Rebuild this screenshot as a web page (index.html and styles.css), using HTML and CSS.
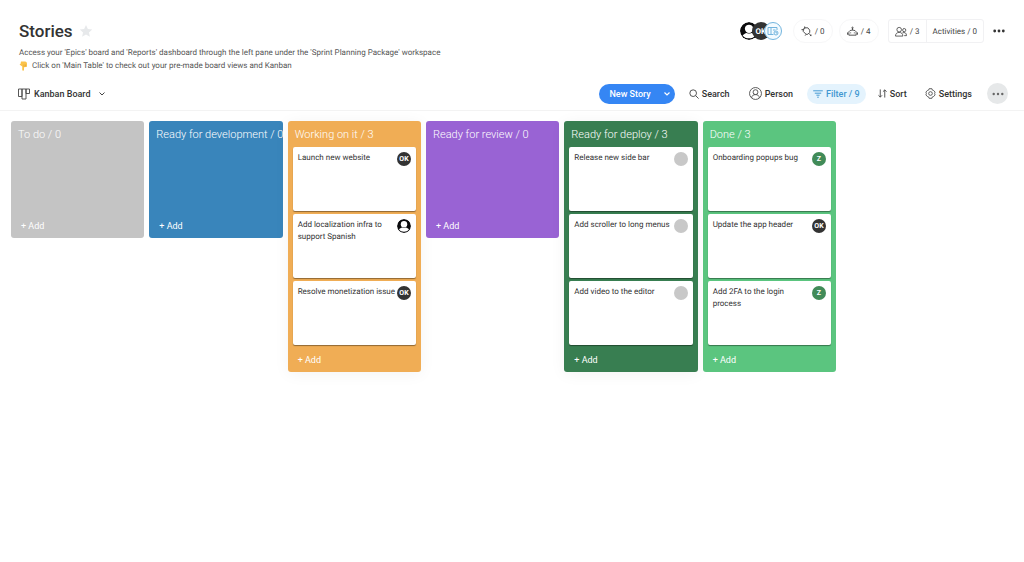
FILE: index.html
```html
<!DOCTYPE html>
<html lang="en">
<head>
<meta charset="utf-8">
<meta name="viewport" content="width=device-width, initial-scale=1">
<title>Stories</title>
<link rel="stylesheet" href="styles.css">
</head>
<body>
<svg class="defs" aria-hidden="true">
  <symbol id="user" viewBox="0 0 24 24">
    <circle cx="12" cy="12" r="12" fill="#0b0b0d"/>
    <circle cx="12" cy="9" r="5.500" fill="#fff"/>
    <path d="M3.500 18c1-2 3.500-3 5.500-3.500 2 1 4 1 6 0 2 .5 4.500 1.500 5.500 3.500-2 2.800-5 3.800-8.500 3.800S5.500 20.800 3.500 18z" fill="#fff"/>
  </symbol>
</svg>
<header class="header">
  <div class="intro">
    <div class="title-row">
      <h1 class="title">Stories</h1>
      <button class="star" aria-label="Add to favorites"><svg viewBox="0 0 24 24" width="14" height="14"><path d="M12 1.500l3.200 7 7.600.8-5.700 5.100 1.600 7.600-6.700-3.900L5.300 22l1.600-7.600L1.200 9.300l7.600-.8z" fill="#e7e9eb"/></svg></button>
    </div>
    <p class="desc">Access your 'Epics' board and 'Reports' dashboard through the left pane under the 'Sprint Planning Package' workspace</p>
    <p class="desc desc-tip"><svg class="hand" viewBox="0 0 18 20" width="9" height="10" aria-hidden="true"><path d="M4 1h8c3 0 4 2 4 5v4c0 2-2 2.500-3 1.500-1 1.500-2.500 1.200-3 .5V18c0 2.200-3.500 2.200-3.500 0v-7L3 8.500C1 7 1 5.500 3 6z" fill="#fbc34a"/><path d="M10 7v5M13 7v4" stroke="#d9962c" fill="none"/></svg>Click on 'Main Table' to check out your pre-made board views and Kanban</p>
  </div>
  <div class="header-actions">
    <div class="members">
      <svg class="member" width="18" height="18" aria-label="Member"><use href="#user"/></svg>
      <span class="member member-ok">OK</span>
      <span class="member member-view"><svg viewBox="0 0 24 24" width="12" height="12" fill="none" stroke="#73b5de" stroke-width="2"><path d="M13 19H2V5h18v5M8 5v14"/><path d="M12 10h5"/><circle cx="18" cy="16" r="4"/><path d="M18 14v2h2"/></svg></span>
    </div>
    <button class="chip"><svg viewBox="0 0 24 24" width="11" height="11" fill="none" stroke="#444" stroke-width="2"><path d="M5 7l3-3h7l4 5v5l-4 4h-4l-6-6zM1 8h6M8 1v5M11 18l-2 3M17 16l6 6M20 22l2-3"/></svg>/ 0</button>
    <button class="chip"><svg viewBox="0 0 24 24" width="11" height="11" fill="none" stroke="#444" stroke-width="2"><path d="M4 20v-6c0-3 3-5 8-5s8 2 8 5v6zM12 9V5M1 14v5M23 14v5M8 14v2M16 14v2"/><circle cx="12" cy="4" r="1.500"/></svg>/ 4</button>
    <div class="group">
      <button class="group-btn"><svg viewBox="0 0 26 24" width="12" height="11" fill="none" stroke="#444" stroke-width="1.800"><circle cx="9" cy="8" r="5"/><circle cx="20" cy="9" r="3.500"/><path d="M1 22c0-5 3-8 8-8s8 3 8 8zM16 15c5-2 9 0 9 6h-5"/></svg>/ 3</button>
      <button class="group-btn">Activities / 0</button>
    </div>
    <button class="more" aria-label="More options"><svg viewBox="0 0 12 4" width="12" height="4" fill="#333"><circle cx="1.700" cy="2" r="1.400"/><circle cx="6" cy="2" r="1.400"/><circle cx="10.300" cy="2" r="1.400"/></svg></button>
  </div>
</header>

<nav class="toolbar">
  <button class="tool view"><svg viewBox="0 0 24 24" width="12" height="12" fill="none" stroke="#444" stroke-width="1.800"><path d="M1 2h7v15H1zM8 2h8v20H8zM16 2h7v9h-7z"/></svg>Kanban Board<svg class="view-caret" viewBox="0 0 12 8" width="6" height="4" fill="none" stroke="#444" stroke-width="2"><path d="M1 1l5 5 5-5"/></svg></button>
  <div class="tools">
    <div class="split">
      <button class="new">New Story</button>
      <button class="new-caret" aria-label="More ways to add"><svg viewBox="0 0 12 8" width="6" height="4" fill="none" stroke="#fff" stroke-width="2.400"><path d="M1 1l5 5 5-5"/></svg></button>
    </div>
    <button class="tool search"><svg viewBox="0 0 24 24" width="10" height="10" fill="none" stroke="#444" stroke-width="2.200"><circle cx="10" cy="10" r="8"/><path d="M16 16l7 7"/></svg>Search</button>
    <button class="tool person"><svg viewBox="0 0 24 24" width="13" height="13" fill="none" stroke="#444" stroke-width="1.600"><circle cx="12" cy="12" r="11"/><circle cx="12" cy="9.500" r="4.500"/><path d="M5 20c0-4 3-6 7-6s7 2 7 6"/></svg>Person</button>
    <button class="tool filter"><svg viewBox="0 0 24 20" width="10" height="8" fill="none" stroke="#3f97d1" stroke-width="2.400"><path d="M0 2h24M4 8h16M8 13h8M10 18h4"/></svg>Filter / 9</button>
    <button class="tool sort"><svg viewBox="0 0 20 20" width="9" height="9" fill="none" stroke="#444" stroke-width="2"><path d="M5 1v17M1 14l4 4 4-4M15 19V2M11 6l4-4 4 4"/></svg>Sort</button>
    <button class="tool settings"><svg viewBox="0 0 24 24" width="11" height="11" fill="none" stroke="#444" stroke-width="1.800"><path d="M9 1.500h6l1 3 3 1 3 3.500-1 3 1 3-3 3.500-3 1-1 3H9l-1-3-3-1L2 15l1-3-1-3 3-3.500 3-1z"/><circle cx="12" cy="12" r="4"/></svg>Settings</button>
    <button class="round" aria-label="More tools"><svg viewBox="0 0 12 4" width="12" height="4" fill="#666"><circle cx="1.700" cy="2" r="1.200"/><circle cx="6" cy="2" r="1.200"/><circle cx="10.300" cy="2" r="1.200"/></svg></button>
  </div>
</nav>

<main class="board">
  <section class="column todo">
    <h2 class="column-title">To do / 0</h2>
    <button class="add">+ Add</button>
  </section>
  <section class="column development">
    <h2 class="column-title">Ready for development / 0</h2>
    <button class="add">+ Add</button>
  </section>
  <section class="column working">
    <h2 class="column-title">Working on it / 3</h2>
    <article class="card"><p class="card-text">Launch new website</p><span class="avatar ok">OK</span></article>
    <article class="card"><p class="card-text">Add localization infra to support Spanish</p><svg class="avatar" aria-label="Member"><use href="#user"/></svg></article>
    <article class="card"><p class="card-text">Resolve monetization issue</p><span class="avatar ok">OK</span></article>
    <button class="add">+ Add</button>
  </section>
  <section class="column review">
    <h2 class="column-title">Ready for review / 0</h2>
    <button class="add">+ Add</button>
  </section>
  <section class="column deploy">
    <h2 class="column-title">Ready for deploy / 3</h2>
    <article class="card"><p class="card-text">Release new side bar</p><span class="avatar empty"></span></article>
    <article class="card"><p class="card-text">Add scroller to long menus</p><span class="avatar empty"></span></article>
    <article class="card"><p class="card-text">Add video to the editor</p><span class="avatar empty"></span></article>
    <button class="add">+ Add</button>
  </section>
  <section class="column done">
    <h2 class="column-title">Done / 3</h2>
    <article class="card"><p class="card-text">Onboarding popups bug</p><span class="avatar z">Z</span></article>
    <article class="card"><p class="card-text">Update the app header</p><span class="avatar ok">OK</span></article>
    <article class="card"><p class="card-text">Add 2FA to the login process</p><span class="avatar z">Z</span></article>
    <button class="add">+ Add</button>
  </section>
</main>
</body>
</html>
```
FILE: styles.css
```css
* { box-sizing: border-box; }

body {
  margin: 0;
  background: #fff;
  color: #333;
  font-family: Roboto, "Liberation Sans", sans-serif;
  font-size: 9px;
}

h1, h2, p { margin: 0; }

button {
  display: inline-flex;
  align-items: center;
  justify-content: center;
  padding: 0;
  border: 0;
  background: none;
  color: inherit;
  font: inherit;
  text-rendering: inherit;
  white-space: nowrap;
  cursor: pointer;
}

svg { display: block; flex: none; }

.defs { position: absolute; width: 0; height: 0; }

.header {
  display: flex;
  justify-content: space-between;
  align-items: flex-start;
  padding: 18px 19px 0 19px;
}

.title-row { display: flex; align-items: center; gap: 6px; height: 26px; margin-bottom: 2px; }
.title { font-size: 17px; font-weight: 500; line-height: 26px; }
.desc { color: #555; font-size: 8px; line-height: 13px; }
.desc-tip { display: flex; align-items: center; gap: 4px; }

.header-actions { display: flex; align-items: center; height: 26px; color: #444; font-size: 8px; }
.desc, .header-actions, .card { text-rendering: geometricPrecision; }
.members { display: flex; margin-right: 11px; }

.member {
  display: flex;
  align-items: center;
  justify-content: center;
  width: 18px;
  height: 18px;
  border-radius: 50%;
}

.member + .member { margin-left: -6px; }
.member-ok { background: #333; color: #fff; font-size: 8px; font-weight: 700; }
.member-view { border: 1px solid #73b5de; background: #f4fbff; }

.chip {
  gap: 3px;
  width: 40px;
  height: 24px;
  margin-right: 6px;
  border: 1px solid #f7f7f8;
  border-radius: 12px;
}

.group {
  display: flex;
  height: 24px;
  margin: 0 9px 0 3px;
  border: 1px solid #f1f1f3;
  border-radius: 3px;
}

.group-btn { gap: 3px; padding: 0 6px; }
.group-btn + .group-btn { border-left: 1px solid #f1f1f3; }
.more { height: 24px; }

.toolbar {
  display: flex;
  align-items: center;
  justify-content: space-between;
  height: 34px;
  margin-top: 5px;
  padding: 0 16px 0 18px;
  border-bottom: 1px solid #f3f3f3;
}

.tool { gap: 4px; height: 20px; font-weight: 500; }
.view-caret { margin-left: 4px; }
.tools { display: flex; align-items: center; }
.tools .tool { gap: 3px; }

.split {
  display: flex;
  height: 20px;
  margin-right: 14px;
  overflow: hidden;
  border-radius: 10px;
  background: #3586f4;
  color: #fff;
}

.new { padding: 0 8px 0 10px; font-weight: 500; }
.new-caret { width: 16px; }
.search { margin-right: 19px; }
.person { margin-right: 14px; }
.filter { margin-right: 12px; padding: 0 6px; border-radius: 10px; background: #e4f3fd; color: #3f97d1; }
.sort { margin-right: 18px; }
.settings { margin-right: 15px; }
.round { width: 21px; height: 21px; border-radius: 50%; background: #e6e8e9; }

.board {
  display: grid;
  grid-template-columns: repeat(6, minmax(0, 1fr));
  align-items: start;
  gap: 5px;
  padding: 10px 188px 24px 11px;
}

.column {
  display: flex;
  flex-direction: column;
  gap: 3px;
  min-height: 117px;
  padding: 0 5px;
  border-radius: 3px;
  color: #fff;
}

.todo { background: #c4c4c4; }
.development { background: #3985bb; }
.working { background: #f0ad55; }
.review { background: #9963d4; }
.deploy { background: #387e51; }
.done { background: #5bc57f; }
.working, .deploy { box-shadow: 0 2px 16px rgb(0 0 0 / 5%); }

.column-title {
  height: 23px;
  margin-right: -5px;
  padding-left: 2px;
  overflow: hidden;
  font-size: 11px;
  font-weight: 300;
  line-height: 27px;
  white-space: nowrap;
}

.card {
  display: flex;
  justify-content: space-between;
  align-items: flex-start;
  min-height: 64px;
  padding: 5px;
  border-radius: 2px;
  background: #fff;
  box-shadow: 0 1px 1px rgb(0 0 0 / 40%);
  color: #333;
}

.card-text { font-size: 8px; line-height: 12px; }

.avatar {
  display: flex;
  flex: none;
  align-items: center;
  justify-content: center;
  width: 14px;
  height: 14px;
  border-radius: 50%;
  color: #fff;
  font-size: 7px;
  font-weight: 700;
}

.ok { background: #333; }
.z { background: #418b58; }
.empty { background: #c8c8c8; }

.add {
  align-self: flex-start;
  height: 24px;
  margin-top: auto;
  padding-left: 5px;
}
```
